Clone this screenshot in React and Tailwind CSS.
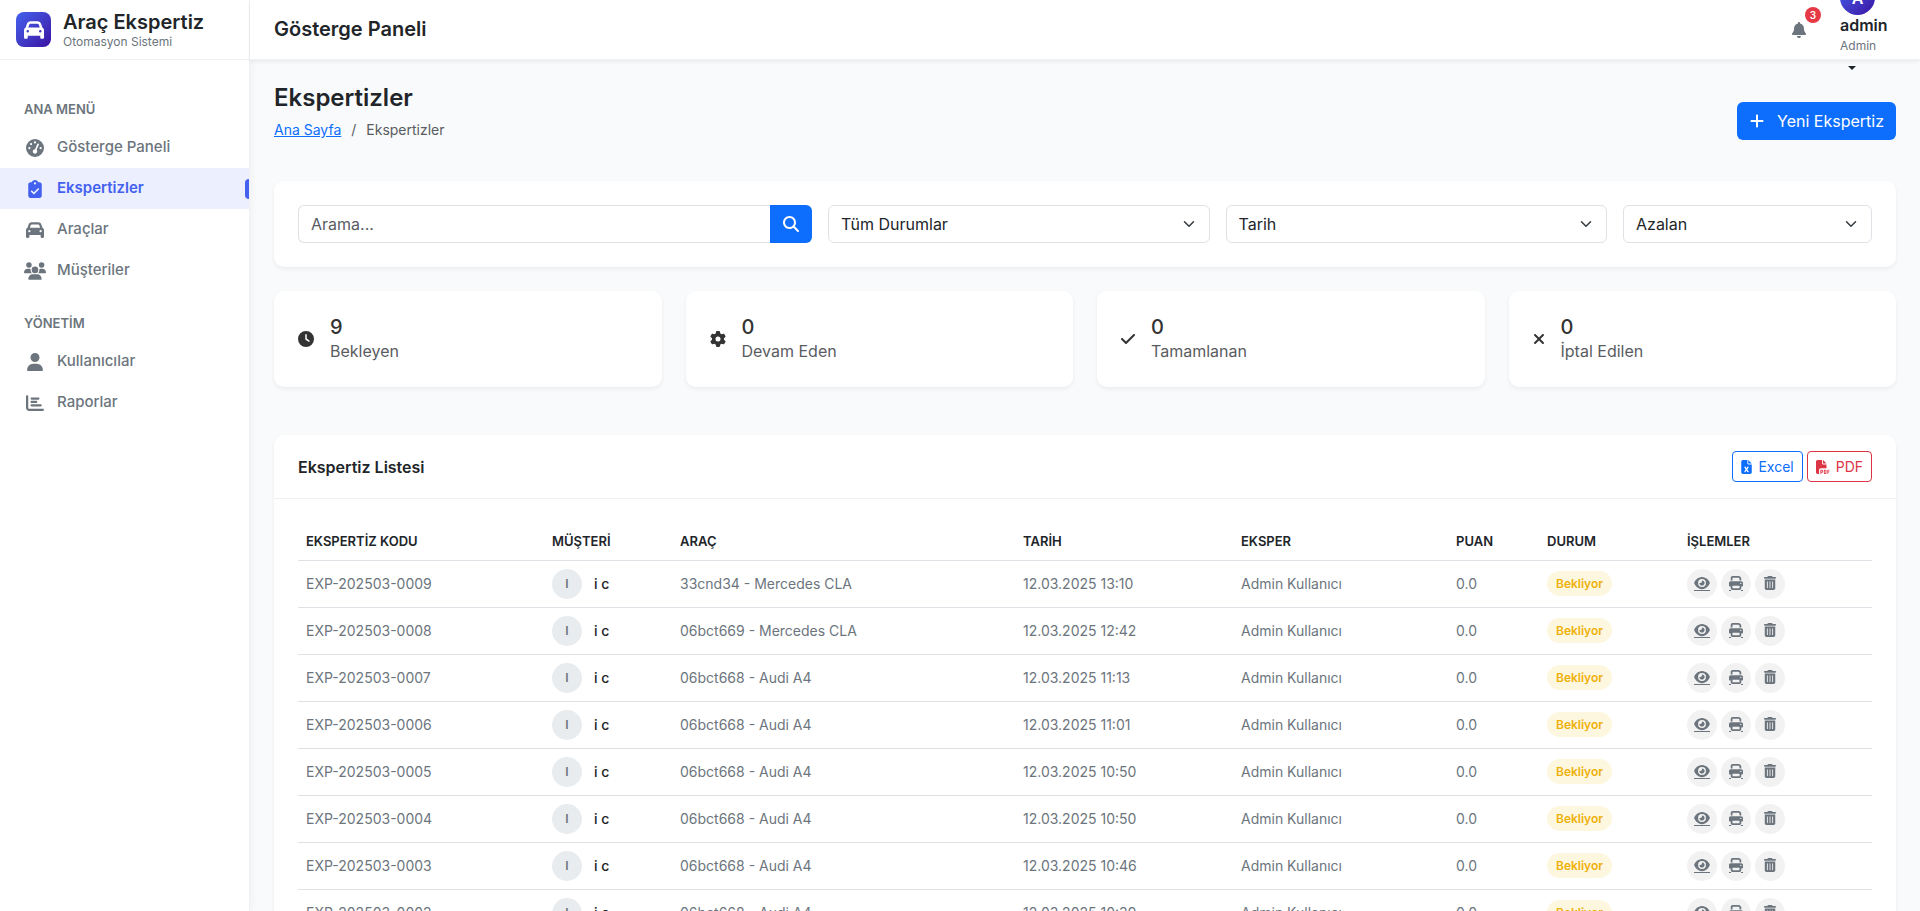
import {
  FaBell,
  FaCar,
  FaChartBar,
  FaCheck,
  FaClipboardCheck,
  FaClock,
  FaEye,
  FaFileExcel,
  FaFilePdf,
  FaGaugeHigh,
  FaGear,
  FaMagnifyingGlass,
  FaPlus,
  FaPrint,
  FaTrashCan,
  FaUser,
  FaUsers,
  FaXmark,
} from "react-icons/fa6";

const mainMenu = [
  { label: "Gösterge Paneli", icon: FaGaugeHigh, size: "size-[18px]" },
  { label: "Ekspertizler", icon: FaClipboardCheck, size: "size-[18px]", active: true },
  { label: "Araçlar", icon: FaCar, size: "size-[18px]" },
  { label: "Müşteriler", icon: FaUsers, size: "h-[18px] w-[22px]" },
];

const adminMenu = [
  { label: "Kullanıcılar", icon: FaUser, size: "size-[18px]" },
  { label: "Raporlar", icon: FaChartBar, size: "size-[18px]" },
];

const stats = [
  { value: "9", label: "Bekleyen", icon: FaClock, size: "h-4 w-4" },
  { value: "0", label: "Devam Eden", icon: FaGear, size: "h-4 w-4" },
  { value: "0", label: "Tamamlanan", icon: FaCheck, size: "h-4 w-[14px]" },
  { value: "0", label: "İptal Edilen", icon: FaXmark, size: "h-4 w-3" },
];

const rows = [
  ["EXP-202503-0009", "33cnd34 - Mercedes CLA", "12.03.2025 13:10"],
  ["EXP-202503-0008", "06bct669 - Mercedes CLA", "12.03.2025 12:42"],
  ["EXP-202503-0007", "06bct668 - Audi A4", "12.03.2025 11:13"],
  ["EXP-202503-0006", "06bct668 - Audi A4", "12.03.2025 11:01"],
  ["EXP-202503-0005", "06bct668 - Audi A4", "12.03.2025 10:50"],
  ["EXP-202503-0004", "06bct668 - Audi A4", "12.03.2025 10:50"],
  ["EXP-202503-0003", "06bct668 - Audi A4", "12.03.2025 10:46"],
  ["EXP-202503-0002", "06bct668 - Audi A4", "12.03.2025 10:39"],
];

const columns = [
  { title: "EKSPERTİZ KODU", width: "w-[246px]" },
  { title: "MÜŞTERİ", width: "w-[128px]" },
  { title: "ARAÇ", width: "w-[343px]" },
  { title: "TARİH", width: "w-[218px]" },
  { title: "EKSPER", width: "w-[215px]" },
  { title: "PUAN", width: "w-[91px]" },
  { title: "DURUM", width: "w-[140px]" },
  { title: "İŞLEMLER", width: "w-[193px]" },
];

function MenuSection({ title, items }) {
  return (
    <section className="mb-[22px]">
      <h2 className="mb-2 px-6 text-[13px] leading-5 font-semibold text-[#6c757d]">{title}</h2>
      <ul>
        {items.map(({ label, icon: Icon, size, active }) => (
          <li key={label}>
            <a
              href="#"
              className={
                active
                  ? "flex h-[41px] items-center bg-[#ebeffe] pl-6 text-[15px] font-semibold text-[#4361ee]"
                  : "flex h-[41px] items-center pl-6 text-[15px] font-medium text-[#6c757d]"
              }
            >
              <span className="mr-3 flex w-[21px] justify-center">
                <Icon className={`${size} shrink-0`} />
              </span>
              {label}
              {active && <span className="ml-auto h-5 w-1 rounded-l bg-[#4361ee]" />}
            </a>
          </li>
        ))}
      </ul>
    </section>
  );
}

function Sidebar() {
  return (
    <aside className="w-[250px] shrink-0 border-r border-[#f0f1f3] bg-white shadow-[0_0_10px_rgba(0,0,0,0.05)]">
      <div className="flex h-[60px] items-center border-b border-[#f0f0f0] px-4">
        <div className="flex size-[35px] shrink-0 items-center justify-center rounded-lg bg-linear-135 from-[#4361ee] to-[#3a0ca3] text-white">
          <FaCar className="size-5" />
        </div>
        <div className="ml-3">
          <div className="text-xl leading-6 font-semibold text-[#212529]">Araç Ekspertiz</div>
          <div className="text-xs leading-4 text-[#6c757d]">Otomasyon Sistemi</div>
        </div>
      </div>
      <nav className="pt-[39px]" aria-label="Menü">
        <MenuSection title="ANA MENÜ" items={mainMenu} />
        <MenuSection title="YÖNETİM" items={adminMenu} />
      </nav>
    </aside>
  );
}

function Topbar() {
  return (
    <header className="relative flex h-[60px] items-center border-b border-[#f0f0f0] bg-white px-6 shadow-[0_2px_4px_rgba(0,0,0,0.06)]">
      <div className="pb-[2px] text-xl font-semibold text-[#212529]">Gösterge Paneli</div>
      <button type="button" aria-label="Bildirimler" className="relative ml-auto flex size-[35px] items-center justify-center text-[#6c757d]">
        <FaBell className="size-4" />
        <span className="absolute -top-[5px] -right-[5px] flex size-4 items-center justify-center rounded-full bg-[#e63946] text-[10px] font-semibold text-white">
          3
        </span>
      </button>
      <button type="button" className="ml-6 flex w-14 flex-col items-start text-left">
        <span className="flex size-[35px] items-center justify-center rounded-full bg-linear-135 from-[#4361ee] to-[#3a0ca3] font-semibold text-white">
          A
        </span>
        <span className="text-base leading-5 font-semibold text-[#212529]">admin</span>
        <span className="text-xs leading-[22px] text-[#6c757d]">Admin</span>
        <span className="ml-2 flex h-[22px] items-center">
          <svg viewBox="0 0 8 4" className="h-1 w-2" fill="#212529">
            <path d="M0 0h8L4 4z" />
          </svg>
        </span>
      </button>
    </header>
  );
}

function Select({ label, value, className }) {
  return (
    <div className={className}>
      <div className="grid items-center">
        <select
          aria-label={label}
          className="col-start-1 row-start-1 h-[38px] w-full appearance-none rounded-md border border-[#dee2e6] bg-white px-3 text-base text-[#212529]"
        >
          <option>{value}</option>
        </select>
        <svg
          viewBox="0 0 16 16"
          fill="none"
          stroke="#343a40"
          strokeWidth="2"
          strokeLinecap="round"
          strokeLinejoin="round"
          className="pointer-events-none col-start-1 row-start-1 mr-[15px] h-3 w-3 justify-self-end"
        >
          <path d="m2 5 6 6 6-6" />
        </svg>
      </div>
    </div>
  );
}

function Filters() {
  return (
    <form className="mt-10 grid grid-cols-12 gap-4 rounded-[10px] bg-white p-6 shadow-[0_2px_4px_rgba(0,0,0,0.06)]">
      <div className="col-span-4 flex">
        <input
          type="text"
          aria-label="Arama"
          placeholder="Arama..."
          className="h-[38px] min-w-0 flex-1 rounded-l-md border border-r-0 border-[#dee2e6] px-3 text-base text-[#212529] placeholder:text-[#595c5f]"
        />
        <button type="button" aria-label="Ara" className="flex w-[42px] items-center justify-center rounded-r-md bg-[#0d6efd] text-white">
          <FaMagnifyingGlass className="size-4" />
        </button>
      </div>
      <Select label="Durum" value="Tüm Durumlar" className="col-span-3" />
      <Select label="Sıralama" value="Tarih" className="col-span-3" />
      <Select label="Yön" value="Azalan" className="col-span-2" />
    </form>
  );
}

function ActionIcons() {
  return (
    <div className="flex gap-1">
      <a href="#" aria-label="Görüntüle" className="flex size-[30px] items-center justify-center rounded-full bg-[#f2f2f2] text-[#6c757d]">
        <span className="border-b border-[#6c757d]">
          <FaEye className="h-[14px] w-4" />
        </span>
      </a>
      <a href="#" aria-label="Yazdır" className="flex size-[30px] flex-col items-center justify-center rounded-full bg-[#f2f2f2] text-[#6c757d]">
        <FaPrint className="size-[14px]" />
        <span className="flex w-[14px] justify-between">
          <span className="h-px w-[2px] bg-[#6c757d]" />
          <span className="h-px w-[2px] bg-[#6c757d]" />
        </span>
      </a>
      <button type="button" aria-label="Sil" className="flex size-[30px] items-center justify-center rounded-full bg-[#f2f2f2] pb-px text-[#6c757d]">
        <FaTrashCan className="size-[14px]" />
      </button>
    </div>
  );
}

function ListCard() {
  return (
    <section className="mt-12 rounded-[10px] bg-white shadow-[0_2px_4px_rgba(0,0,0,0.06)]">
      <div className="flex items-center border-b border-[#f0f0f0] px-6 py-4">
        <h2 className="text-base font-semibold text-[#212529]">Ekspertiz Listesi</h2>
        <div className="ml-auto flex gap-1">
          <button type="button" className="flex h-[31px] items-center gap-[6px] rounded border border-[#0d6efd] px-2 text-sm text-[#0d6efd]">
            <FaFileExcel className="h-[14px] w-[11px]" />
            Excel
          </button>
          <button type="button" className="flex h-[31px] items-center gap-[6px] rounded border border-[#dc3545] px-2 text-sm text-[#dc3545]">
            <FaFilePdf className="size-[14px]" />
            PDF
          </button>
        </div>
      </div>
      <div className="p-6">
        <table className="w-full table-fixed border-collapse text-left text-sm text-[#6c757d]">
          <thead>
            <tr className="h-[37px] border-b border-[#dee2e6]">
              {columns.map(({ title, width }) => (
                <th key={title} className={`${width} px-2 text-[13px] font-semibold text-[#212529]`}>
                  {title}
                </th>
              ))}
            </tr>
          </thead>
          <tbody>
            {rows.map(([code, car, date]) => (
              <tr key={code} className="h-[47px] border-b border-[#dee2e6]">
                <td className="px-2">{code}</td>
                <td className="px-2">
                  <div className="flex items-center gap-3">
                    <span className="flex size-[30px] items-center justify-center rounded-full bg-[#e9ecef] text-xs font-semibold">
                      I
                    </span>
                    <span className="font-medium text-[#212529]">i c</span>
                  </div>
                </td>
                <td className="px-2">{car}</td>
                <td className="px-2">{date}</td>
                <td className="px-2">Admin Kullanıcı</td>
                <td className="px-2">0.0</td>
                <td className="px-2">
                  <span className="inline-flex h-[25px] items-center rounded-full bg-[#fef7e0] px-[9px] text-xs font-semibold text-[#eeb10a]">
                    Bekliyor
                  </span>
                </td>
                <td className="px-2">
                  <ActionIcons />
                </td>
              </tr>
            ))}
          </tbody>
        </table>
      </div>
    </section>
  );
}

export default function App() {
  return (
    <div className="flex h-screen overflow-hidden bg-[#f8fafc] font-[Inter,'Noto_Sans',sans-serif] text-[#212529]">
      <Sidebar />
      <div className="min-w-0 flex-1">
        <Topbar />
        <main className="p-6 pt-5">
          <div className="flex items-center">
            <div>
              <h1 className="text-2xl leading-9 font-semibold">Ekspertizler</h1>
              <nav aria-label="Konum" className="mt-1 flex gap-[10px] pb-[1px] text-sm leading-5 text-[#595c5f]">
                <a href="#" className="text-[#0d6efd] underline">
                  Ana Sayfa
                </a>
                <span>/</span>
                <span>Ekspertizler</span>
              </nav>
            </div>
            <button type="button" className="mt-[21px] ml-auto flex h-[38px] items-center gap-3 rounded-md bg-[#0d6efd] px-3 text-base text-white">
              <FaPlus className="size-4" />
              Yeni Ekspertiz
            </button>
          </div>
          <Filters />
          <div className="mt-6 grid grid-cols-4 gap-6">
            {stats.map(({ value, label, icon: Icon, size }) => (
              <div key={label} className="flex items-center gap-4 rounded-[10px] bg-white p-6 shadow-[0_2px_4px_rgba(0,0,0,0.06)]">
                <Icon className={`${size} shrink-0 text-[#333333]`} />
                <div>
                  <div className="text-xl leading-6 font-medium text-[#333333]">{value}</div>
                  <div className="text-base leading-6 text-[#595c5f]">{label}</div>
                </div>
              </div>
            ))}
          </div>
          <ListCard />
        </main>
      </div>
    </div>
  );
}
